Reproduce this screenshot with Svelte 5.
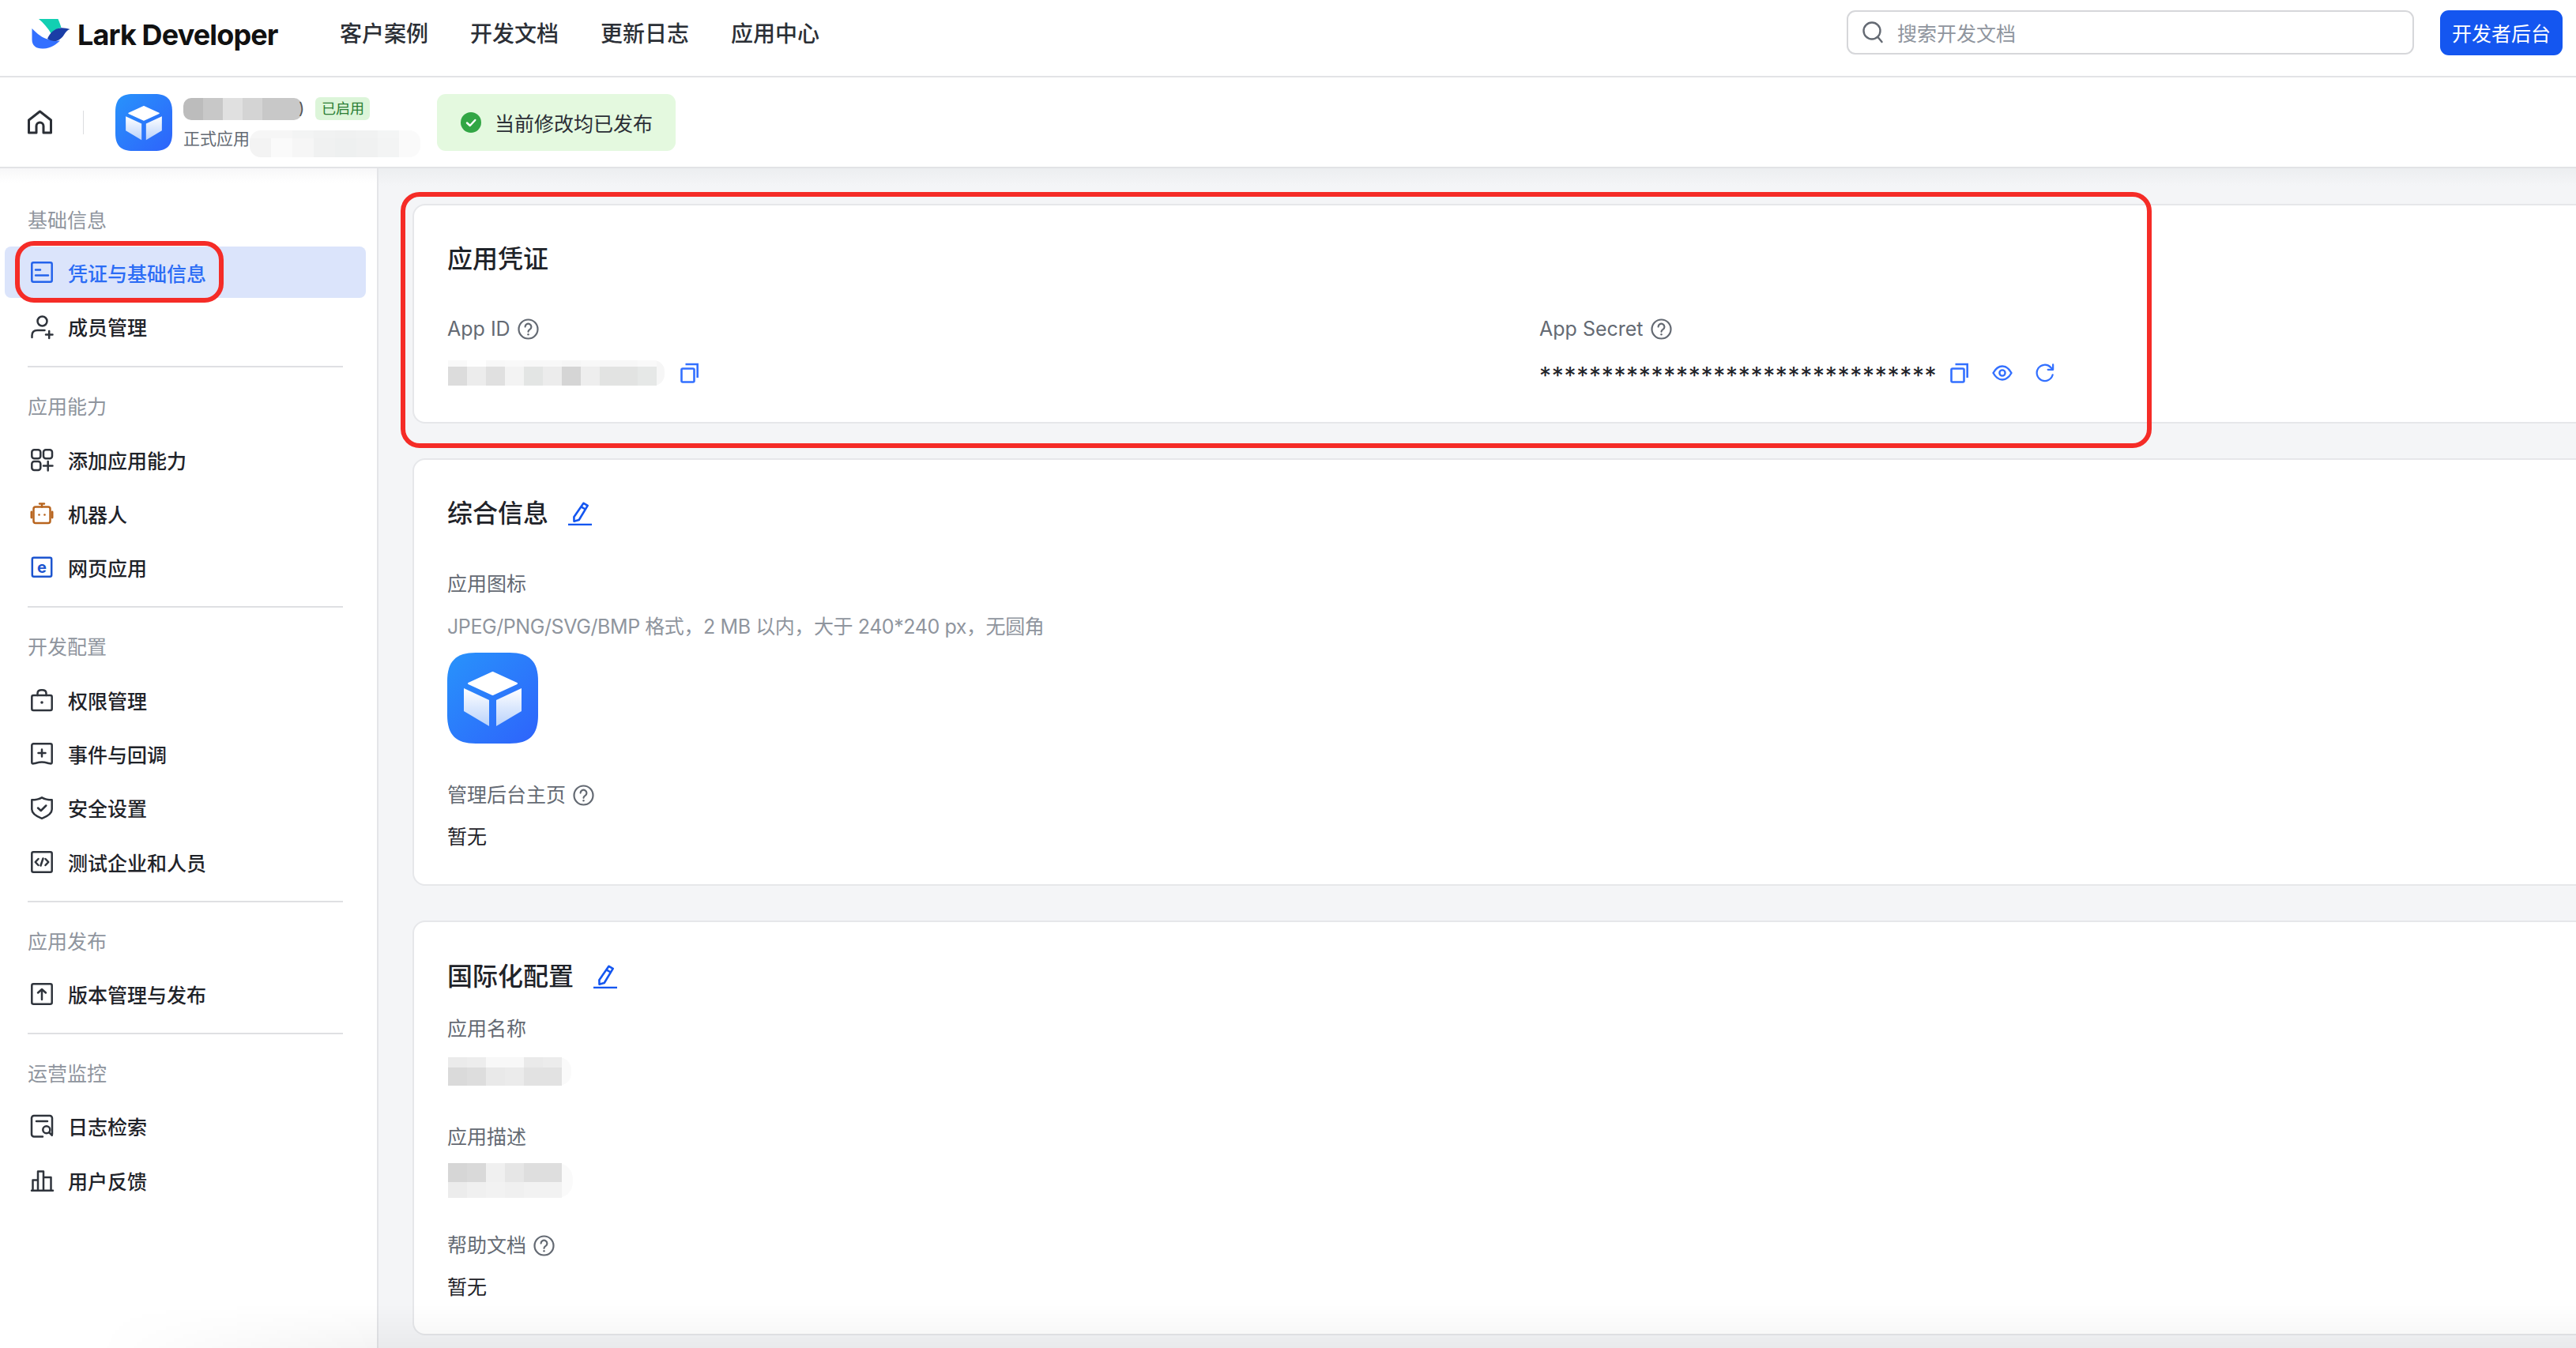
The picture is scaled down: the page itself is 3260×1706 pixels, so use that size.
<script>
  const nav = ["客户案例", "开发文档", "更新日志", "应用中心"];
  const groups = [
    { title: "基础信息", items: [
      { label: "凭证与基础信息", icon: "cred", active: true },
      { label: "成员管理", icon: "member" },
    ] },
    { title: "应用能力", items: [
      { label: "添加应用能力", icon: "add" },
      { label: "机器人", icon: "bot" },
      { label: "网页应用", icon: "web" },
    ] },
    { title: "开发配置", items: [
      { label: "权限管理", icon: "lock" },
      { label: "事件与回调", icon: "event" },
      { label: "安全设置", icon: "shield" },
      { label: "测试企业和人员", icon: "code" },
    ] },
    { title: "应用发布", items: [
      { label: "版本管理与发布", icon: "upload" },
    ] },
    { title: "运营监控", items: [
      { label: "日志检索", icon: "log" },
      { label: "用户反馈", icon: "chart" },
    ] },
  ];

  // redacted bits of the screenshot, rows of [height, colours]
  const nameBlur = [[28, ["#bcbcbc", "#c8c8c8", "#e0e0e0", "#d4d4d4", "#c8c8c8", "#c8c8c8"]]];
  const subBlur = [
    [10, ["#f6f6f6", "#f6f6f6", "#f3f4f4", "#f1f2f2", "#f0f1f1", "#f1f2f2", "#f4f5f5", "#fafafa"]],
    [24, ["#f3f3f3", "#fafafa", "#f6f6f6", "#f0f1f1", "#eef0f0", "#f0f1f1", "#f3f4f4", "#fafafa"]],
  ];
  const idBlur = [
    [8, ["#f9f9f9", "#fefefe", "#f8f8f8", "#f9f9f9", "#f8f8f8", "#f8f8f8", "#f6f6f6", "#f8f8f8", "#f7f7f7", "#f7f7f7", "#f9f9f9"]],
    [24, ["#dcdcdc", "#ececec", "#e0e0e0", "#f3f3f3", "#e3e5e4", "#ececec", "#d5d5d5", "#eeeeee", "#e2e3e2", "#e2e3e2", "#e6e8e7"]],
  ];
  const titleBlur = [
    [13, ["#ebebeb", "#ededed", "#f8f8f8", "#f8f8f8", "#eaeaea", "#ececec"]],
    [23, ["#dadada", "#dddddd", "#e9e9e9", "#ebebeb", "#e2e2e2", "#e2e2e2"]],
  ];
  const descBlur = [
    [24, ["#d6d6d6", "#d9d9d9", "#f0f0f0", "#e6e6e6", "#dedede", "#dedede"]],
    [20, ["#ececec", "#f0f0f0", "#f2f2f2", "#f0f0f0", "#f2f2f2", "#f2f2f2"]],
  ];
</script>

{#snippet help()}
  <svg class="help" viewBox="0 0 27 27" fill="none" stroke="currentColor" stroke-width="2.2">
    <circle cx="13.5" cy="13.5" r="12" />
    <path d="M9.6 10.6a3.9 3.9 0 1 1 6 3.3c-1.3.8-2.1 1.5-2.1 2.9" stroke-linecap="round" />
    <circle cx="13.5" cy="20.2" r="1.2" fill="currentColor" stroke="none" />
  </svg>
{/snippet}

{#snippet copy()}
  <svg class="action" viewBox="0 0 24 26" fill="none" stroke="currentColor" stroke-width="2.6">
    <rect x="1.5" y="7.5" width="16" height="17" rx="1.5" />
    <path d="M6.5 2h15.2v17" />
  </svg>
{/snippet}

{#snippet pencil()}
  <svg class="pencil" viewBox="0 0 30 30" fill="none" stroke="currentColor" stroke-width="2.6">
    <path d="M19.5 1.8l5.2 3-11 18.2-6.2 1.7-.1-5.5z" stroke-linejoin="round" />
    <path d="M16.5 6.3l5.3 3.2" />
    <path d="M0 29h30" />
  </svg>
{/snippet}

{#snippet appIcon(size)}
  <svg width={size} height={size} viewBox="0 0 115 115">
    <defs>
      <linearGradient id="ig-bg-{size}" x1="0" y1="0" x2="1" y2="1">
        <stop offset="0" stop-color="#2893fb" />
        <stop offset="1" stop-color="#2e63fb" />
      </linearGradient>
      <linearGradient id="ig-fg-{size}" x1="0" y1="0" x2="0" y2="1">
        <stop offset="0" stop-color="#ffffff" />
        <stop offset="1" stop-color="#b9d2fb" />
      </linearGradient>
    </defs>
    <path d="M36 0H79C104 0 115 11 115 36V79C115 104 104 115 79 115H36C11 115 0 104 0 79V36C0 11 11 0 36 0z" fill="url(#ig-bg-{size})" />
    <g fill="url(#ig-fg-{size})" stroke-width="2" stroke-linejoin="round">
      <path d="M57.5 25L88 39 57.5 53 27 39z" fill="#fff" stroke="#fff" />
      <path d="M21 45L53 60V93L21 74z" />
      <path d="M94 45L62 60V93L94 74z" />
    </g>
  </svg>
{/snippet}

{#snippet mosaic(rows, cell, cls)}
  <div class="mosaic {cls}">
    {#each rows as [h, colours]}
      <div class="mosaic-row">
        {#each colours as c}
          <span style="width:{cell}px;height:{h}px;background:{c}"></span>
        {/each}
      </div>
    {/each}
  </div>
{/snippet}

{#snippet navIcon(name)}
  <svg class="nav-icon" viewBox="0 0 28 28" fill="none" stroke="currentColor" stroke-width="2.5" stroke-linecap="round" stroke-linejoin="round">
    {#if name === "cred"}
      <rect x="1.3" y="1.3" width="25.4" height="24.4" rx="2" />
      <path d="M6 10.5h6M6 17.5h16" />
    {:else if name === "member"}
      <circle cx="14.5" cy="7.5" r="6" />
      <path d="M1.5 28v-2.5c0-4.500 3-6.500 7-6.500h9" />
      <path d="M19 24.500h8.500M23.200 20v9" />
    {:else if name === "add"}
      <rect x="1.300" y="1.300" width="11" height="11" rx="3" />
      <rect x="16" y="1.300" width="11" height="11" rx="3" />
      <rect x="1.300" y="16" width="11" height="11" rx="3" />
      <path d="M16 21.500h11.500M21.700 16v11.500" />
    {:else if name === "bot"}
      <g stroke="#b8651f">
        <rect x="3.500" y="5.500" width="21" height="20.500" rx="2.500" />
        <path d="M14 1.500v4M11 1.500h6" />
        <path d="M.9 12v7M27.100 12v7" stroke-width="2.800" />
      </g>
      <circle cx="10.500" cy="15.500" r="1.300" fill="#b8651f" stroke="none" />
      <circle cx="17.500" cy="15.500" r="1.300" fill="#b8651f" stroke="none" />
    {:else if name === "web"}
      <rect x="1.800" y="1.800" width="24.400" height="24" rx="2" stroke="#1d55cf" />
      <text x="14" y="20.500" text-anchor="middle" class="e-glyph">e</text>
    {:else if name === "lock"}
      <rect x="1.300" y="8" width="25.400" height="19" rx="2" />
      <path d="M8.500 8V5.500C8.500 2.500 10.500 1.300 14 1.300s5.500 1.200 5.500 4.200V8" />
      <circle cx="14" cy="17" r="1.800" fill="currentColor" stroke="none" />
    {:else if name === "event"}
      <path d="M1.300 3.300a2 2 0 0 1 2-2h21.400a2 2 0 0 1 2 2V25c0 2-2 1.500-4 1s-5-1.500-8.700-1.500-6.700 1-8.700 1.500-4 1-4-1z" />
      <path d="M9.500 13h9M14 8.500v9" />
    {:else if name === "shield"}
      <path d="M14 1.300c3.500 2 8 3 12.700 3v12c0 5-6 9-12.700 11.500C7.300 25.300 1.300 21.300 1.300 16.300v-12C6 4.300 10.500 3.300 14 1.300z" />
      <path d="M9 14.500l3.800 3.500 6.500-6.500" />
    {:else if name === "code"}
      <rect x="1.300" y="1.300" width="25.400" height="25.400" rx="2" />
      <path d="M9.500 10L5.700 14l3.800 4M18.500 10l3.800 4-3.800 4M15.500 9.500l-3 9" />
    {:else if name === "upload"}
      <rect x="1.300" y="1.300" width="25.400" height="25.400" rx="2" />
      <path d="M14 21V8M9 12.500L14 8l5 4.500" />
    {:else if name === "log"}
      <path d="M15 27.500H4a3 3 0 0 1-3-3V4a3 3 0 0 1 3-3h20a3 3 0 0 1 3 3v20.500" />
      <path d="M7 8h14" />
      <circle cx="19.800" cy="18.800" r="4.500" />
      <path d="M23.300 22.300l3.500 3.500" />
    {:else if name === "chart"}
      <path d="M1 26.700h27" />
      <path d="M2.500 26.500V13.500h6.500M9 26.500V2.500h7V26.500M16 10h9.500V26.500" />
    {/if}
  </svg>
{/snippet}

<div class="page">
  <header class="topbar">
    <svg class="logo" viewBox="10 6 49 41">
      <path d="M19 7H43.500C45 11 46.500 14 47.500 18 42 19 38 22 35 26 31 19 25 12 19 7z" fill="#12cfb2" />
      <path d="M10.500 19C17 26 24 31 30 32.500 35 34 40 35 46 34.500 41 39.500 34 44 25 44.500 16 45 10.500 41 10.500 33z" fill="#3370ff" />
      <path d="M30 32C33 25 39 19 46 18.500 50 18 54 19 58.500 20 55 21 53 24 51 27 48 32 43 35.500 38 35 35 34.500 32 33.500 30 32z" fill="#1a3ea6" />
    </svg>
    <span class="wordmark">Lark Developer</span>
    <nav class="main-nav">
      {#each nav as n}<a href="#top">{n}</a>{/each}
    </nav>
    <div class="search">
      <svg viewBox="0 0 26 28" fill="none" stroke="#646a73" stroke-width="2.400" stroke-linecap="round">
        <circle cx="12" cy="12" r="10.500" />
        <path d="M19.500 20l5 6" />
      </svg>
      <span>搜索开发文档</span>
    </div>
    <button class="console">开发者后台</button>
  </header>

  <div class="subbar">
    <svg class="home" viewBox="0 0 31 31" fill="none" stroke="#2b2f36" stroke-width="3" stroke-linejoin="round">
      <path d="M15.500 2L29.500 13V29H20V20.500a4.500 4.500 0 0 0-9 0V29H1.500V13z" />
    </svg>
    <span class="vline"></span>
    <div class="sub-icon">{@render appIcon(72)}</div>
    <div class="app-meta">
      <div class="meta-row">
        {@render mosaic(nameBlur, 25, "name-blur")}
        <span class="paren">)</span>
        <span class="badge">已启用</span>
      </div>
      <div class="meta-row second">
        <span class="app-type">正式应用</span>
        {@render mosaic(subBlur, 27, "sub-blur")}
      </div>
    </div>
    <div class="published">
      <svg viewBox="0 0 26 26" width="26" height="26">
        <circle cx="13" cy="13" r="13" fill="#32a645" />
        <path d="M8 13.500l3.800 3.500 6.500-7" fill="none" stroke="#fff" stroke-width="2.400" stroke-linecap="round" stroke-linejoin="round" />
      </svg>
      <span>当前修改均已发布</span>
    </div>
  </div>

  <div class="content">
    <aside class="sidebar">
      {#each groups as g, i}
        {#if i > 0}<div class="rule" class:first={i === 1}></div>{/if}
        <div class="group-title">{g.title}</div>
        {#each g.items as item}
          <div class="item" class:active={item.active}>
            {@render navIcon(item.icon)}
            <span>{item.label}</span>
          </div>
        {/each}
      {/each}
    </aside>

    <main class="main">
      <section class="card">
        <h2>应用凭证</h2>
        <div class="creds">
          <div>
            <div class="label">App ID {@render help()}</div>
            <div class="value">
              {@render mosaic(idBlur, 24, "id-blur")}
              <span class="blue copy-id">{@render copy()}</span>
            </div>
          </div>
          <div>
            <div class="label">App Secret {@render help()}</div>
            <div class="value">
              <span class="stars">********************************</span>
              <span class="blue actions">
                {@render copy()}
                <svg class="action eye" viewBox="0 0 26 20" fill="none" stroke="currentColor" stroke-width="2.400" stroke-linejoin="round">
                  <path d="M1.500 10C4.500 4.500 8.500 1.500 13 1.500S21.500 4.500 24.500 10C21.500 15.500 17.500 18.500 13 18.500S4.500 15.500 1.500 10z" />
                  <circle cx="13" cy="10" r="3.600" />
                </svg>
                <svg class="action" viewBox="0 0 26 26" fill="none" stroke="currentColor" stroke-width="2.400" stroke-linecap="round" stroke-linejoin="round">
                  <path d="M23.500 15.500A11 11 0 1 1 20.500 5l3 3" />
                  <path d="M24 1.500V8.500H17" />
                </svg>
              </span>
            </div>
          </div>
        </div>
      </section>

      <section class="card">
        <h2>综合信息 <span class="edit">{@render pencil()}</span></h2>
        <div class="label first">应用图标</div>
        <div class="hint">JPEG/PNG/SVG/BMP 格式，2 MB 以内，大于 240*240 px，无圆角</div>
        <div class="big-icon">{@render appIcon(115)}</div>
        <div class="label admin">管理后台主页 {@render help()}</div>
        <div class="plain">暂无</div>
      </section>

      <section class="card last">
        <h2>国际化配置 <span class="edit">{@render pencil()}</span></h2>
        <div class="label name-label">应用名称</div>
        {@render mosaic(titleBlur, 24, "title-blur")}
        <div class="label desc-label">应用描述</div>
        {@render mosaic(descBlur, 24, "desc-blur")}
        <div class="label doc-label">帮助文档 {@render help()}</div>
        <div class="plain">暂无</div>
      </section>
    </main>
  </div>

  <!-- red annotation frames drawn over the screenshot -->
  <div class="mark mark-nav"></div>
  <div class="mark mark-card"></div>
  <div class="bottom-fade"></div>
</div>

<style>
  :global(body) {
    margin: 0;
    background: #f4f5f7;
  }
  .page {
    position: relative;
    width: 3260px;
    height: 1706px;
    overflow: hidden;
    display: flex;
    flex-direction: column;
    font-family: Inter, "Noto Sans CJK SC", sans-serif;
    color: #1f2329;
  }

  .topbar {
    height: 96px;
    flex: none;
    box-sizing: content-box;
    display: flex;
    align-items: center;
    background: #fff;
    border-bottom: 2px solid #e2e3e6;
    padding: 0 17px 0 40px;
  }
  .logo {
    width: 49px;
    height: 41px;
    margin-top: -10px;
    flex: none;
  }
  .wordmark {
    margin-left: 9px;
    width: 332px;
    flex: none;
    margin-top: -9px;
    font-size: 36px;
    font-weight: 700;
    letter-spacing: -0.86px;
    color: #111;
  }
  .main-nav {
    display: flex;
    gap: 53px;
    margin-top: -14px;
  }
  .main-nav a {
    font-size: 28px;
    font-weight: 500;
    color: #2b2f36;
    text-decoration: none;
  }
  .search {
    margin-left: auto;
    margin-top: -14px;
    width: 718px;
    height: 56px;
    box-sizing: border-box;
    border: 2px solid #d6d7da;
    border-radius: 11px;
    display: flex;
    align-items: center;
    padding-left: 18px;
    gap: 18px;
    font-size: 25px;
    color: #8f959e;
  }
  .search svg {
    width: 26px;
    height: 28px;
  }
  .console {
    margin-left: 33px;
    margin-top: -14px;
    width: 155px;
    height: 57px;
    border: 0;
    border-radius: 11px;
    background: #1456f0;
    color: #fff;
    font: inherit;
    font-size: 25px;
    padding: 0;
  }

  .subbar {
    height: 113px;
    flex: none;
    display: flex;
    align-items: center;
    background: #fff;
    border-bottom: 2px solid #e2e3e6;
    padding-left: 35px;
  }
  .home {
    width: 31px;
    height: 31px;
  }
  .vline {
    width: 1px;
    height: 30px;
    background: #dcdde0;
    margin: 0 40px 0 39px;
  }
  .sub-icon {
    display: flex;
    margin-right: 14px;
  }
  .app-meta {
    width: 321px;
    align-self: flex-start;
    padding-top: 25px;
  }
  .meta-row {
    display: flex;
    align-items: flex-start;
  }
  .meta-row.second {
    margin-top: 13px;
  }
  .mosaic {
    display: flex;
    flex-direction: column;
    flex: none;
    width: fit-content;
  }
  .mosaic-row {
    display: flex;
  }
  .mosaic-row span {
    display: block;
  }
  .name-blur {
    border-radius: 10px;
    overflow: hidden;
    margin-top: 1px;
  }
  .paren {
    width: 17px;
    margin-left: -4px;
    font-size: 20px;
    line-height: 29px;
    color: #555;
  }
  .badge {
    height: 29px;
    line-height: 29px;
    padding: 0 8px;
    width: 53px;
    white-space: nowrap;
    font-size: 18px;
    color: #2a7d33;
    background: #dcf5d9;
    border-radius: 6px;
    margin-left: 4px;
  }
  .app-type {
    font-size: 21px;
    line-height: 22px;
    color: #646a73;
  }
  .sub-blur {
    border-radius: 14px;
    overflow: hidden;
  }
  .published {
    width: 302px;
    height: 72px;
    box-sizing: border-box;
    display: flex;
    align-items: center;
    gap: 17px;
    padding-left: 30px;
    border-radius: 11px;
    background: #e4f9df;
    font-size: 25px;
    color: #2b2f36;
    align-self: flex-start;
    margin-top: 21px;
  }

  .content {
    flex: 1;
    display: flex;
    min-height: 0;
  }
  .sidebar {
    width: 477px;
    flex: none;
    background: linear-gradient(#f7f7f8, #fff 18px);
    border-right: 2px solid #e4e5e8;
    padding-top: 31px;
  }
  .group-title {
    height: 65px;
    margin-bottom: 3.4px;
    padding-left: 35px;
    display: flex;
    align-items: center;
    font-size: 25px;
    color: #8f959e;
  }
  .item {
    height: 65px;
    margin: 0 14px 3.4px 6px;
    box-sizing: border-box;
    padding-left: 33px;
    border-radius: 8px;
    display: flex;
    align-items: center;
    gap: 19px;
    font-size: 25px;
    font-weight: 500;
    color: #1f2329;
  }
  .item.active {
    background: #dbe4fb;
    color: #2b6cf5;
  }
  .nav-icon {
    width: 28px;
    height: 28px;
    color: #2f343c;
    flex: none;
    overflow: visible;
  }
  .active .nav-icon {
    color: #2463eb;
  }
  .e-glyph {
    font-family: Inter, sans-serif;
    font-size: 20px;
    font-weight: 700;
    fill: #1d55cf;
    stroke: none;
  }
  .rule {
    height: 2px;
    margin: 16.4px 43px 15.5px 35px;
    background: #dfe0e3;
  }
  .rule.first {
    margin-top: 17.4px;
  }

  .main {
    flex: 1;
    min-width: 0;
    overflow: hidden;
    padding: 45px 0 0 43px;
    background: linear-gradient(#eceef0, #f4f5f7 22px);
  }
  .card {
    margin: 0 -40px 44px 0;
    background: #fff;
    border: 2px solid #e6e7ea;
    border-radius: 16px;
    padding: 45px 40px 44px 42px;
  }
  .card:nth-child(2) {
    padding-bottom: 43px;
  }
  .card.last {
    margin-bottom: 0;
    padding-top: 46px;
    padding-bottom: 42px;
  }
  h2 {
    margin: 0;
    font-size: 32px;
    padding-top: 2px;
    line-height: 42px;
    font-weight: 500;
    color: #1f2329;
    display: flex;
    align-items: center;
  }
  .edit {
    margin-left: 25px;
    display: flex;
    color: #1456f0;
  }
  .pencil {
    width: 30px;
    height: 30px;
  }
  .creds {
    display: grid;
    grid-template-columns: 1382px 1fr;
    margin-top: 48px;
  }
  .label {
    display: flex;
    align-items: center;
    gap: 9px;
    font-size: 25px;
    padding-top: 2px;
    line-height: 34px;
    color: #646a73;
  }
  .label.first {
    margin-top: 49px;
  }
  .label.admin {
    margin-top: 46px;
  }
  .label.name-label {
    margin-top: 26px;
  }
  .label.desc-label {
    margin-top: 46px;
  }
  .label.doc-label {
    margin-top: 41px;
  }
  .help {
    width: 27px;
    height: 27px;
    color: #646a73;
    flex: none;
  }
  .value {
    margin-top: 21px;
    height: 36px;
    display: flex;
    align-items: center;
  }
  .id-blur {
    margin-left: 1px;
    padding-right: 10px;
    background: #f6f6f6;
    border-radius: 0 14px 14px 0;
  }
  .blue {
    color: #3370ff;
    display: inline-flex;
  }
  .copy-id {
    margin-left: 20px;
  }
  .action {
    width: 24px;
    height: 26px;
  }
  .eye {
    width: 26px;
    height: 20px;
    align-self: center;
  }
  .stars {
    font-size: 30px;
    line-height: 36px;
    letter-spacing: 0.7px;
    color: #1f2329;
    width: 520px;
    white-space: nowrap;
    padding-top: 6px;
  }
  .actions {
    gap: 29px;
    align-items: center;
  }
  .hint {
    margin-top: 18px;
    font-size: 25px;
    padding-top: 2px;
    line-height: 34px;
    letter-spacing: -0.42px;
    color: #8f959e;
  }
  .big-icon {
    margin-top: 16px;
    display: flex;
  }
  .plain {
    margin-top: 17px;
    font-size: 25px;
    padding-top: 2px;
    line-height: 34px;
    color: #1f2329;
  }
  .title-blur {
    margin-top: 19px;
    margin-left: 1px;
    padding-right: 12px;
    background: #fafafa;
    border-radius: 0 16px 16px 0;
  }
  .desc-blur {
    margin-top: 16px;
    margin-left: 1px;
    padding-right: 14px;
    background: #fafafa;
    border-radius: 0 20px 20px 0;
  }

  .mark {
    position: absolute;
    box-sizing: border-box;
    border: 6px solid #f52c27;
    pointer-events: none;
  }
  .mark-nav {
    left: 19px;
    top: 305px;
    width: 264px;
    height: 78px;
    border-radius: 24px;
  }
  .mark-card {
    left: 507px;
    top: 243px;
    width: 2216px;
    height: 324px;
    border-radius: 24px;
  }
  .bottom-fade {
    position: absolute;
    left: 0;
    right: 0;
    bottom: 0;
    height: 56px;
    background: linear-gradient(rgba(0, 0, 0, 0), rgba(0, 0, 0, 0.045));
    mask-image: linear-gradient(90deg, transparent 120px, #000 480px);
    pointer-events: none;
  }
</style>
